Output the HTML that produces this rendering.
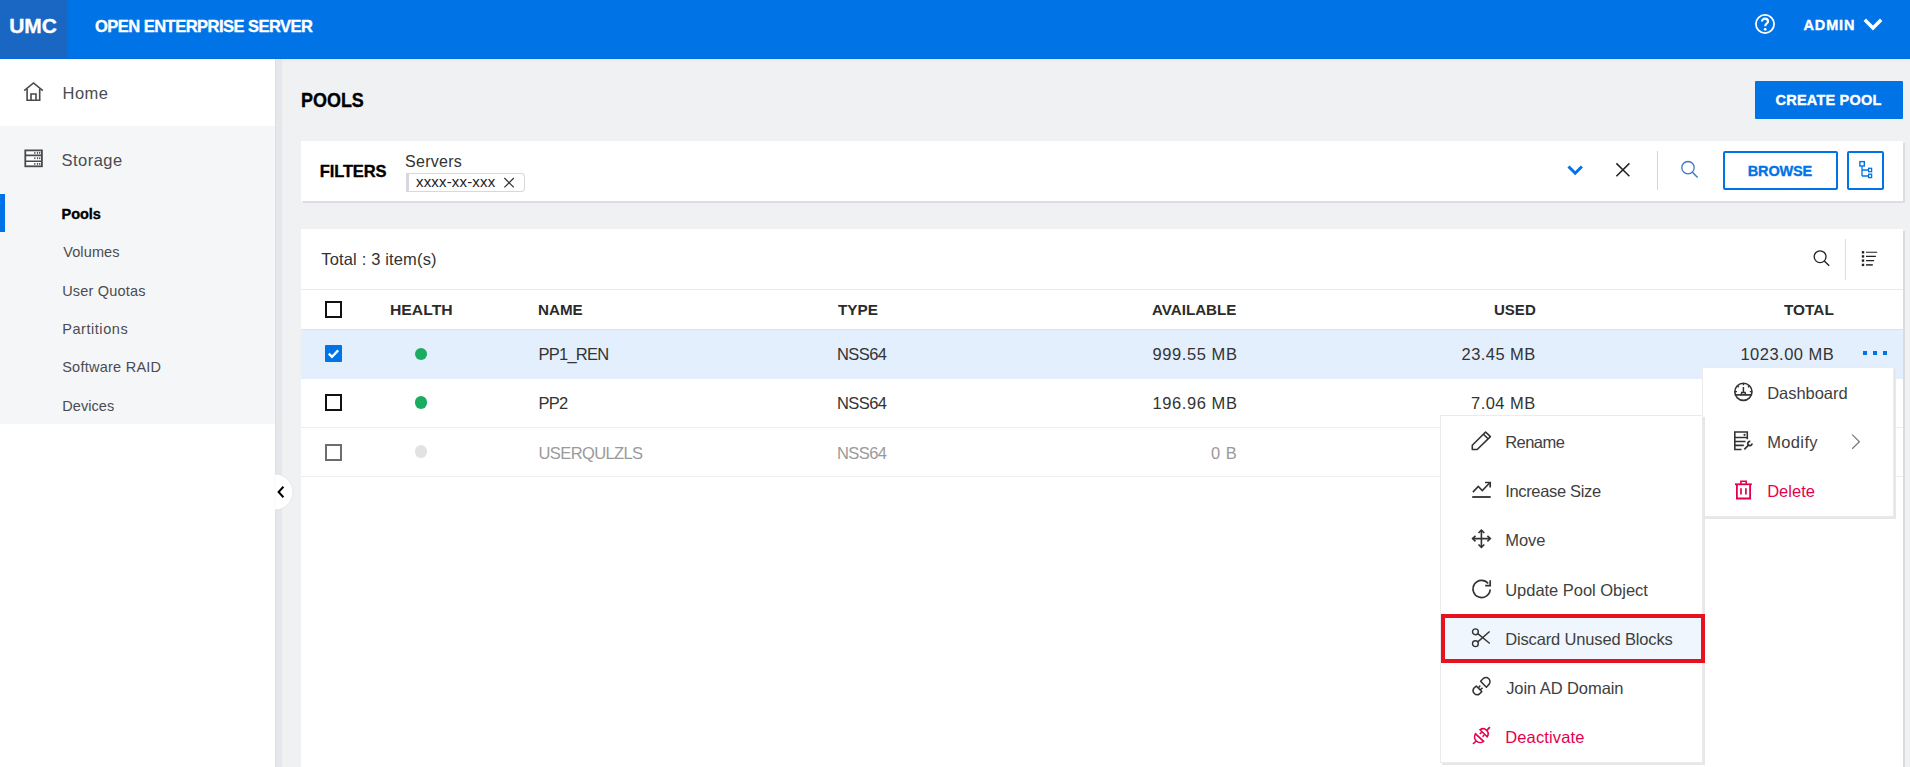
<!DOCTYPE html>
<html><head><meta charset="utf-8"><title>Pools</title>
<style>
html,body{margin:0;padding:0;width:1910px;height:767px;overflow:hidden;background:#f0f1f3;font-family:"Liberation Sans",sans-serif;}
.a{position:absolute;}
.t{position:absolute;line-height:1;white-space:nowrap;font-family:"Liberation Sans",sans-serif;}
svg{position:absolute;overflow:visible;}
</style></head><body>
<!-- header -->
<div class=a style="left:0;top:0;width:1910px;height:59px;background:#0073e7"></div>
<div class=a style="left:0;top:58px;width:1910px;height:1px;background:#006ade"></div>
<div class=a style="left:0;top:0;width:67px;height:58px;background:#1967c3"></div>
<svg style="left:1754px;top:13px" width="22" height="22" viewBox="0 0 22 22">
  <circle cx="11" cy="11" r="9.1" fill="none" stroke="#fff" stroke-width="1.8"/>
  <path d="M8 8.6 C8 6.8 9.4 5.6 11 5.6 C12.7 5.6 14 6.8 14 8.4 C14 10.4 11.2 10.6 11.2 13.2" fill="none" stroke="#fff" stroke-width="2.2"/>
  <circle cx="11.2" cy="16.3" r="1.4" fill="#fff"/>
</svg>
<svg style="left:1860px;top:15px" width="26" height="18" viewBox="0 0 26 18">
  <path d="M6 6 L13 13 L20 6" fill="none" stroke="#fff" stroke-width="3.4" stroke-linecap="square"/>
</svg>

<!-- sidebar -->
<div class=a style="left:0;top:59px;width:275px;height:67px;background:#fff"></div>
<div class=a style="left:0;top:126px;width:275px;height:298px;background:#f5f6f8"></div>
<div class=a style="left:0;top:424px;width:275px;height:343px;background:#fff"></div>
<div class=a style="left:275px;top:59px;width:7px;height:708px;background:#e6e7ea"></div>
<div class=a style="left:275px;top:59px;width:1px;height:708px;background:#dcdde0"></div>
<div class=a style="left:282px;top:59px;width:1628px;height:4px;background:linear-gradient(#eaebed,#f0f1f3)"></div>
<div class=a style="left:0;top:194px;width:5px;height:38px;background:#0073e7"></div>
<svg style="left:20px;top:78px" width="28" height="28" viewBox="0 0 28 28">
  <path d="M4.2 12.6 L13.5 5 L22.8 12.6" fill="none" stroke="#4a4a4a" stroke-width="1.6"/>
  <path d="M7.1 11 V22.3 H19.7 V11" fill="none" stroke="#4a4a4a" stroke-width="1.6"/>
  <path d="M11 22.3 V16 H16 V22.3" fill="none" stroke="#4a4a4a" stroke-width="1.6"/>
</svg>
<svg style="left:20px;top:144px" width="28" height="28" viewBox="0 0 28 28">
  <rect x="5.3" y="6.4" width="16.6" height="15.9" fill="#fff" stroke="#4a4a4a" stroke-width="1.8"/>
  <path d="M5.3 11.4 H21.9 M5.3 17.2 H21.9" stroke="#4a4a4a" stroke-width="1.6"/>
  <g fill="#4a4a4a">
   <rect x="14.2" y="8" width="1.2" height="1.8"/><rect x="16.9" y="8" width="1.2" height="1.8"/><rect x="19.1" y="8" width="1.2" height="1.8"/>
   <rect x="14.2" y="13.3" width="1.2" height="1.8"/><rect x="16.9" y="13.3" width="1.2" height="1.8"/><rect x="19.1" y="13.3" width="1.2" height="1.8"/>
   <rect x="14.2" y="19" width="1.2" height="1.8"/><rect x="16.9" y="19" width="1.2" height="1.8"/><rect x="19.1" y="19" width="1.2" height="1.8"/>
  </g>
</svg>
<!-- collapse button -->
<svg style="left:275px;top:473px" width="20" height="38" viewBox="0 0 20 38">
  <path d="M0 1 A18 18 0 0 1 0 37 Z" fill="#fff" stroke="#dfe0e2" stroke-width="0.8"/>
  <path d="M0 1.4 V36.6" stroke="#fff" stroke-width="1.5"/>
  <path d="M8.4 13.8 L3.6 19 L8.4 24.2" fill="none" stroke="#000" stroke-width="2"/>
</svg>

<!-- create pool -->
<div class=a style="left:1755px;top:81px;width:148px;height:38px;background:#0073e7;border-radius:1px"></div>

<!-- filter card -->
<div class=a style="left:301px;top:141px;width:1602px;height:60px;background:#fff;box-shadow:2px 2px 0 #dcdde0"></div>
<div class=a style="left:406px;top:173px;width:115px;height:17px;border:1px solid #d6d8db;border-left:3px solid #d6d8db;border-radius:0 4px 4px 0;background:#fff"></div>
<svg style="left:500px;top:174px" width="18" height="18" viewBox="0 0 18 18">
  <path d="M4.4 4 L13.8 13.4 M13.8 4 L4.4 13.4" stroke="#333" stroke-width="1.2"/>
</svg>
<svg style="left:1560px;top:155px" width="30" height="30" viewBox="0 0 30 30">
  <path d="M8.5 11.5 L15.2 18.2 L21.9 11.5" fill="none" stroke="#0073e7" stroke-width="3"/>
</svg>
<svg style="left:1608px;top:155px" width="30" height="30" viewBox="0 0 30 30">
  <path d="M8.4 8.4 L21.4 21.2 M21.4 8.4 L8.4 21.2" stroke="#222" stroke-width="1.5"/>
</svg>
<div class=a style="left:1657px;top:151px;width:1px;height:39px;background:#d3d5d8"></div>
<svg style="left:1674px;top:155px" width="30" height="30" viewBox="0 0 30 30">
  <circle cx="14" cy="12.7" r="6.2" fill="none" stroke="#3e78bd" stroke-width="1.3"/>
  <path d="M18.4 17.2 L23.6 22.4" stroke="#3e78bd" stroke-width="1.4"/>
</svg>
<div class=a style="left:1723px;top:151px;width:111px;height:35px;border:2px solid #0073e7;border-radius:2px"></div>
<div class=a style="left:1847px;top:151px;width:33px;height:35px;border:2px solid #0073e7;border-radius:2px"></div>
<svg style="left:1850px;top:155px" width="30" height="30" viewBox="0 0 30 30">
  <rect x="9.9" y="6.6" width="4.4" height="4.4" fill="none" stroke="#0073e7" stroke-width="1.4"/>
  <path d="M12 11 V21 M12 15 H18.3 M12 21 H18.3" fill="none" stroke="#0073e7" stroke-width="1.3"/>
  <rect x="18.6" y="13.3" width="3" height="3.4" fill="none" stroke="#0073e7" stroke-width="1.3"/>
  <rect x="18.6" y="19.2" width="3" height="3.4" fill="none" stroke="#0073e7" stroke-width="1.3"/>
</svg>

<!-- table card -->
<div class=a style="left:301px;top:229px;width:1602px;height:560px;background:#fff;box-shadow:2px 2px 0 #dadbde"></div>
<svg style="left:1805px;top:240px" width="30" height="30" viewBox="0 0 30 30">
  <circle cx="15.1" cy="16.7" r="5.9" fill="none" stroke="#222" stroke-width="1.3"/>
  <path d="M19.3 21 L24.2 25.8" stroke="#222" stroke-width="1.4"/>
</svg>
<div class=a style="left:1845px;top:239px;width:1px;height:41px;background:#dcdee1"></div>
<svg style="left:1855px;top:245px" width="28" height="28" viewBox="0 0 28 28">
  <g fill="#222"><rect x="6.8" y="6.1" width="2.4" height="2.4"/><rect x="6.8" y="10.2" width="2.4" height="2.4"/><rect x="6.8" y="14.4" width="2.4" height="2.4"/><rect x="6.8" y="18.7" width="2.4" height="2.4"/></g>
  <path d="M11 7.3 H22.2 M11 11.4 H20.9 M11 15.6 H19.1" stroke="#222" stroke-width="1.1"/>
  <path d="M11 19.9 H17.8" stroke="#333" stroke-width="1.6"/>
</svg>
<div class=a style="left:301px;top:289px;width:1602px;height:1px;background:#e9eaec"></div>
<div class=a style="left:301px;top:329px;width:1602px;height:1px;background:#dfe1e4"></div>
<div class=a style="left:301px;top:330px;width:1602px;height:49px;background:#e3effc"></div>
<div class=a style="left:301px;top:427px;width:1602px;height:1px;background:#eceef0"></div>
<div class=a style="left:301px;top:476px;width:1602px;height:1px;background:#eceef0"></div>
<!-- checkboxes -->
<div class=a style="left:325px;top:301px;width:13px;height:13px;border:2px solid #111"></div>
<div class=a style="left:325px;top:345px;width:17px;height:17px;background:#0073e7;border-radius:1px"></div>
<svg style="left:325px;top:345px" width="17" height="17" viewBox="0 0 17 17">
  <path d="M3.8 8.6 L7 11.8 L13.2 5.4" fill="none" stroke="#fff" stroke-width="2.3"/>
</svg>
<div class=a style="left:325px;top:394px;width:13px;height:13px;border:2px solid #111"></div>
<div class=a style="left:325px;top:444px;width:13px;height:13px;border:2px solid #6d6d6d"></div>
<!-- health dots -->
<div class=a style="left:415px;top:347.6px;width:12.3px;height:12.3px;border-radius:50%;background:#1aac60"></div>
<div class=a style="left:415px;top:396.3px;width:12.3px;height:12.3px;border-radius:50%;background:#1aac60"></div>
<div class=a style="left:415px;top:445.4px;width:12.3px;height:12.3px;border-radius:50%;background:#e2e2e2"></div>
<!-- more dots -->
<div class=a style="left:1862.5px;top:351px;width:4.2px;height:4px;background:#0073e7"></div>
<div class=a style="left:1872.5px;top:351px;width:4.2px;height:4px;background:#0073e7"></div>
<div class=a style="left:1882.5px;top:351px;width:4.2px;height:4px;background:#0073e7"></div>

<!-- right popup (dashboard/modify/delete) -->
<div class=a style="left:1703px;top:368px;width:190px;height:148px;background:#fff;box-shadow:0 0 0 1px #ebebeb, 2px 2px 0 1px #e7e7e7"></div>
<!-- left popup -->
<div class=a style="left:1441px;top:416px;width:261px;height:346px;background:#fff;box-shadow:0 0 0 1px #ebebeb, 2px 2px 0 1px #e7e7e7"></div>
<div class=a style="left:1441px;top:614px;width:256px;height:41px;border:4px solid #e4131f;background:#f0f6fd"></div>

<!-- menu icons left -->
<svg style="left:1466px;top:426px" width="32" height="32" viewBox="0 0 32 32">
  <path d="M6.3 23.5 V19.3 L19.6 6 L24.4 10.6 L11.2 23.5 Z M17.4 8.2 L22.1 12.8" fill="none" stroke="#333" stroke-width="1.6" stroke-linejoin="round"/>
</svg>
<svg style="left:1466px;top:475px" width="32" height="32" viewBox="0 0 32 32">
  <path d="M6.9 17.1 L12.3 11.5 L16.3 15.5 L23.6 8" fill="none" stroke="#333" stroke-width="1.6"/>
  <path d="M19 7.5 H24.2 V12.6" fill="none" stroke="#333" stroke-width="1.7"/>
  <path d="M6.2 22 H24.7" stroke="#3a3a3a" stroke-width="1.9"/>
</svg>
<svg style="left:1466px;top:524px" width="32" height="32" viewBox="0 0 32 32">
  <path d="M15.4 6.2 V23.3 M6.6 14.6 H24.3" stroke="#333" stroke-width="1.6"/>
  <path d="M12.5 9 L15.4 6.1 L18.3 9 M12.5 20.5 L15.4 23.4 L18.3 20.5 M9.5 11.8 L6.6 14.6 L9.5 17.4 M21.4 11.8 L24.3 14.6 L21.4 17.4" fill="none" stroke="#333" stroke-width="1.6"/>
</svg>
<svg style="left:1466px;top:573px" width="32" height="32" viewBox="0 0 32 32">
  <path d="M24.2 16.4 A8.6 8.6 0 1 1 22.2 10.4" fill="none" stroke="#333" stroke-width="1.6"/>
  <path d="M24.2 7.3 V12.7 H19.2" fill="none" stroke="#333" stroke-width="1.7"/>
</svg>
<svg style="left:1466px;top:622px" width="32" height="32" viewBox="0 0 32 32">
  <circle cx="9.4" cy="9.8" r="2.9" fill="none" stroke="#333" stroke-width="1.4"/>
  <circle cx="9.4" cy="21.7" r="2.9" fill="none" stroke="#333" stroke-width="1.4"/>
  <path d="M11.8 11.6 L23.8 21.5 M11.8 19.9 L23.6 9.5" stroke="#333" stroke-width="1.4"/>
</svg>
<svg style="left:1466px;top:671px" width="32" height="32" viewBox="0 0 32 32">
  <path d="M14.6 10.2 L17 7.8 A4.1 4.1 0 0 1 22.8 13.6 L20.4 16.2 Z" fill="none" stroke="#333" stroke-width="1.5" stroke-linejoin="round"/>
  <path d="M10.3 15 L15.8 20.6 L13.4 23 A4.1 4.1 0 0 1 7.7 17.4 Z" fill="none" stroke="#333" stroke-width="1.5" stroke-linejoin="round"/>
  <path d="M12.3 16.9 L14.3 14.6 M14.3 18.9 L16.5 16.8" stroke="#333" stroke-width="1.5"/>
</svg>
<svg style="left:1466px;top:720px" width="32" height="32" viewBox="0 0 32 32">
  <path d="M9.6 13.8 L17.5 21.3 A5.5 5.5 0 0 1 9.6 13.8 Z" fill="none" stroke="#e5004c" stroke-width="1.6"/>
  <path d="M10.2 21 L7 24" stroke="#e5004c" stroke-width="1.7"/>
  <path d="M14 9.8 L21.2 16.8 A5.1 5.1 0 0 0 14 9.8 Z" fill="none" stroke="#e5004c" stroke-width="1.6"/>
  <path d="M20.8 10.4 L23.9 7.2" stroke="#e5004c" stroke-width="1.7"/>
  <path d="M15.6 12.3 L13.8 13.8 M18.1 15 L16.6 16.8" stroke="#e5004c" stroke-width="1.6"/>
</svg>
<!-- menu icons right -->
<svg style="left:1728px;top:377px" width="32" height="32" viewBox="0 0 32 32">
  <circle cx="15.4" cy="14.8" r="8.6" fill="none" stroke="#333" stroke-width="1.6"/>
  <path d="M6.9 17.9 H23.9" stroke="#333" stroke-width="1.7"/>
  <path d="M15.4 9.9 V15.2 M13.2 17.9 L13.7 15.6 L17.1 15.6 L17.6 17.9" fill="none" stroke="#333" stroke-width="1.5"/>
  <path d="M15.4 6.2 V8.2 M7 14.6 H9 M21.8 14.6 H23.8 M9.5 8.9 L10.8 10.2 M21.3 8.9 L20 10.2" stroke="#333" stroke-width="1.4"/>
</svg>
<svg style="left:1728px;top:426px" width="32" height="32" viewBox="0 0 32 32">
  <path d="M19.3 13.3 V6 H6.8 V23.5 H13.5 M6.8 11.5 H19.3 M6.8 15.5 H17.5 M6.8 19.4 H15.8" fill="none" stroke="#333" stroke-width="1.6"/>
  <circle cx="16.5" cy="8.8" r="1.1" fill="#333"/>
  <path d="M16.3 23.4 L20.5 19.2" stroke="#333" stroke-width="1.7"/>
  <path d="M22.3 15.5 A2.1 2.1 0 1 0 24 17.6" fill="none" stroke="#333" stroke-width="1.8"/>
</svg>
<svg style="left:1845px;top:430px" width="20" height="24" viewBox="0 0 20 24">
  <path d="M7.2 4.6 L14.4 11.7 L7.2 18.8" fill="none" stroke="#777" stroke-width="1.2"/>
</svg>
<svg style="left:1728px;top:475px" width="32" height="32" viewBox="0 0 32 32">
  <path d="M7 9.3 H23.8" stroke="#e5004c" stroke-width="1.8"/>
  <path d="M12.9 9.3 V6.3 H18.2 V9.3" fill="none" stroke="#e5004c" stroke-width="1.6"/>
  <path d="M8.9 9.3 V23.5 H22.1 V9.3" fill="none" stroke="#e5004c" stroke-width="1.8"/>
  <path d="M13 13.3 V19.4 M17.9 13.3 V19.4" stroke="#e5004c" stroke-width="1.7"/>
</svg>

<div class=t style='left:9.20px;top:15.00px;font-size:21px;font-weight:700;color:#fff;letter-spacing:0.000px;-webkit-text-stroke:0.35px currentColor'>UMC</div>
<div class=t style='left:95.00px;top:18.00px;font-size:16.5px;font-weight:700;color:#fff;letter-spacing:-0.524px;-webkit-text-stroke:0.35px currentColor'>OPEN ENTERPRISE SERVER</div>
<div class=t style='left:1803.40px;top:18.00px;font-size:14.5px;font-weight:700;color:#fff;letter-spacing:0.900px;-webkit-text-stroke:0.35px currentColor'>ADMIN</div>
<div class=t style='left:62.60px;top:85.00px;font-size:16.5px;font-weight:400;color:#4a4c50;letter-spacing:0.433px;'>Home</div>
<div class=t style='left:61.60px;top:152.00px;font-size:16.5px;font-weight:400;color:#4a4c50;letter-spacing:0.450px;'>Storage</div>
<div class=t style='left:61.60px;top:207.00px;font-size:14.5px;font-weight:700;color:#000;letter-spacing:-0.050px;-webkit-text-stroke:0.35px currentColor'>Pools</div>
<div class=t style='left:63.20px;top:245.00px;font-size:14.5px;font-weight:400;color:#4a4c50;letter-spacing:0.117px;'>Volumes</div>
<div class=t style='left:62.20px;top:284.40px;font-size:14.5px;font-weight:400;color:#4a4c50;letter-spacing:0.180px;'>User Quotas</div>
<div class=t style='left:62.20px;top:322.00px;font-size:14.5px;font-weight:400;color:#4a4c50;letter-spacing:0.556px;'>Partitions</div>
<div class=t style='left:62.20px;top:360.00px;font-size:14.5px;font-weight:400;color:#4a4c50;letter-spacing:0.250px;'>Software RAID</div>
<div class=t style='left:62.20px;top:399.00px;font-size:14.5px;font-weight:400;color:#4a4c50;letter-spacing:0.083px;'>Devices</div>
<div class=t style='left:300.50px;top:90.20px;font-size:20px;font-weight:700;color:#000;letter-spacing:0.000px;transform:scaleX(0.8971);transform-origin:0 0;-webkit-text-stroke:0.35px currentColor'>POOLS</div>
<div class=t style='left:1775.60px;top:93.40px;font-size:14.5px;font-weight:700;color:#fff;letter-spacing:0.200px;-webkit-text-stroke:0.35px currentColor'>CREATE POOL</div>
<div class=t style='left:319.80px;top:163.10px;font-size:16.5px;font-weight:700;color:#000;letter-spacing:-0.133px;-webkit-text-stroke:0.35px currentColor'>FILTERS</div>
<div class=t style='left:405.00px;top:153.80px;font-size:16px;font-weight:400;color:#333;letter-spacing:0.283px;'>Servers</div>
<div class=t style='left:416.00px;top:174.00px;font-size:15px;font-weight:400;color:#222;letter-spacing:0.170px;'>xxxx-xx-xxx</div>
<div class=t style='left:1747.80px;top:163.80px;font-size:14.5px;font-weight:700;color:#0073e7;letter-spacing:-0.160px;-webkit-text-stroke:0.35px currentColor'>BROWSE</div>
<div class=t style='left:321.30px;top:251.40px;font-size:16.5px;font-weight:400;color:#333;letter-spacing:0.156px;'>Total : 3 item(s)</div>
<div class=t style='left:389.58px;top:303.00px;font-size:14px;font-weight:700;color:#2b2b2b;letter-spacing:0.000px;transform:scaleX(1.1241);transform-origin:0 0;'>HEALTH</div>
<div class=t style='left:538.41px;top:303.00px;font-size:14px;font-weight:700;color:#2b2b2b;letter-spacing:0.000px;transform:scaleX(1.0850);transform-origin:0 0;'>NAME</div>
<div class=t style='left:838.00px;top:303.00px;font-size:14px;font-weight:700;color:#2b2b2b;letter-spacing:0.000px;transform:scaleX(1.0917);transform-origin:0 0;'>TYPE</div>
<div class=t style='left:1151.80px;top:303.00px;font-size:14px;font-weight:700;color:#2b2b2b;letter-spacing:0.000px;transform:scaleX(1.0808);transform-origin:0 0;'>AVAILABLE</div>
<div class=t style='left:1493.93px;top:303.00px;font-size:14px;font-weight:700;color:#2b2b2b;letter-spacing:0.000px;transform:scaleX(1.0730);transform-origin:0 0;'>USED</div>
<div class=t style='left:1783.50px;top:303.00px;font-size:14px;font-weight:700;color:#2b2b2b;letter-spacing:0.000px;transform:scaleX(1.0978);transform-origin:0 0;'>TOTAL</div>
<div class=t style='left:538.50px;top:346.00px;font-size:16.5px;font-weight:400;color:#333;letter-spacing:-0.750px;'>PP1_REN</div>
<div class=t style='left:837.00px;top:346.00px;font-size:16.5px;font-weight:400;color:#333;letter-spacing:-0.575px;'>NSS64</div>
<div class=t style='left:1152.60px;top:346.00px;font-size:16.5px;font-weight:400;color:#333;letter-spacing:0.562px;'>999.55 MB</div>
<div class=t style='left:1461.50px;top:346.00px;font-size:16.5px;font-weight:400;color:#333;letter-spacing:0.457px;'>23.45 MB</div>
<div class=t style='left:1740.40px;top:346.00px;font-size:16.5px;font-weight:400;color:#333;letter-spacing:0.500px;'>1023.00 MB</div>
<div class=t style='left:538.50px;top:395.00px;font-size:16.5px;font-weight:400;color:#333;letter-spacing:-0.700px;'>PP2</div>
<div class=t style='left:837.00px;top:395.00px;font-size:16.5px;font-weight:400;color:#333;letter-spacing:-0.575px;'>NSS64</div>
<div class=t style='left:1152.50px;top:395.00px;font-size:16.5px;font-weight:400;color:#333;letter-spacing:0.575px;'>196.96 MB</div>
<div class=t style='left:1471.10px;top:395.00px;font-size:16.5px;font-weight:400;color:#333;letter-spacing:0.433px;'>7.04 MB</div>
<div class=t style='left:538.50px;top:445.00px;font-size:16.5px;font-weight:400;color:#9a9a9a;letter-spacing:-0.600px;'>USERQULZLS</div>
<div class=t style='left:837.00px;top:445.00px;font-size:16.5px;font-weight:400;color:#9a9a9a;letter-spacing:-0.575px;'>NSS64</div>
<div class=t style='left:1211.00px;top:445.00px;font-size:16.5px;font-weight:400;color:#9a9a9a;letter-spacing:0.550px;'>0 B</div>
<div class=t style='left:1505.20px;top:434.30px;font-size:16.5px;font-weight:400;color:#404040;letter-spacing:-0.540px;'>Rename</div>
<div class=t style='left:1505.20px;top:483.20px;font-size:16.5px;font-weight:400;color:#404040;letter-spacing:-0.333px;'>Increase Size</div>
<div class=t style='left:1505.20px;top:532.30px;font-size:16.5px;font-weight:400;color:#404040;letter-spacing:-0.033px;'>Move</div>
<div class=t style='left:1505.20px;top:581.60px;font-size:16.5px;font-weight:400;color:#404040;letter-spacing:-0.024px;'>Update Pool Object</div>
<div class=t style='left:1505.20px;top:631.00px;font-size:16.5px;font-weight:400;color:#404040;letter-spacing:-0.150px;'>Discard Unused Blocks</div>
<div class=t style='left:1506.20px;top:680.20px;font-size:16.5px;font-weight:400;color:#404040;letter-spacing:-0.077px;'>Join AD Domain</div>
<div class=t style='left:1505.20px;top:729.30px;font-size:16.5px;font-weight:400;color:#e5004c;letter-spacing:0.144px;'>Deactivate</div>
<div class=t style='left:1767.20px;top:384.60px;font-size:16.5px;font-weight:400;color:#404040;letter-spacing:-0.037px;'>Dashboard</div>
<div class=t style='left:1767.20px;top:434.30px;font-size:16.5px;font-weight:400;color:#404040;letter-spacing:0.360px;'>Modify</div>
<div class=t style='left:1767.20px;top:482.50px;font-size:16.5px;font-weight:400;color:#e5004c;letter-spacing:0.020px;'>Delete</div>
</body></html>
